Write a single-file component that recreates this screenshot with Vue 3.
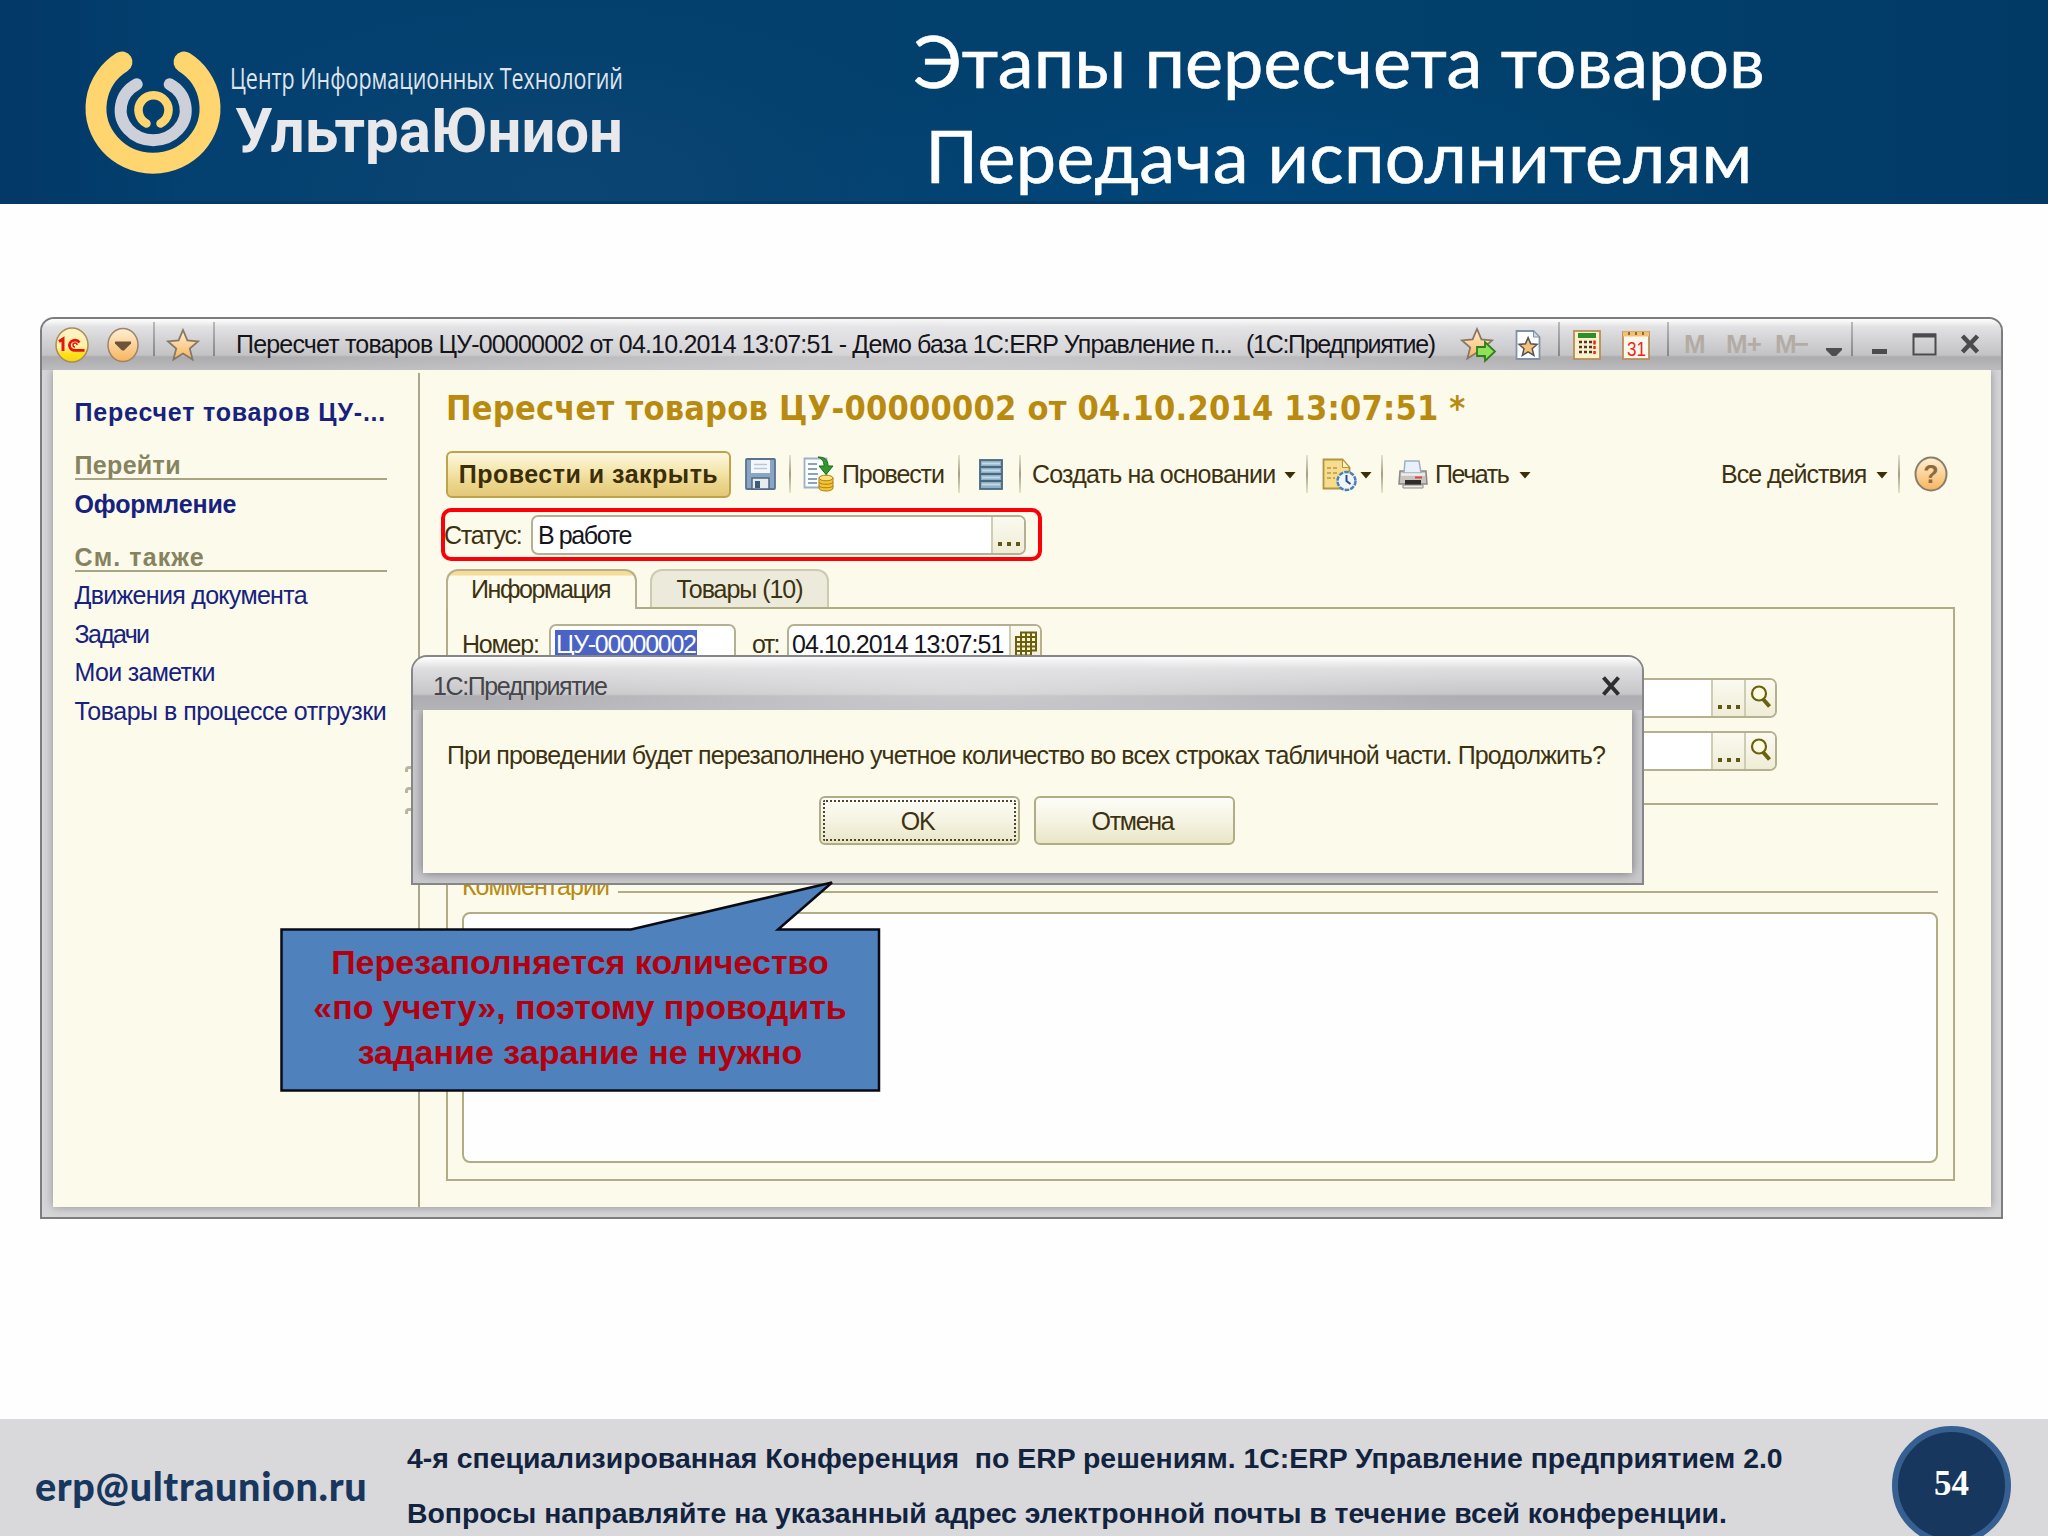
<script setup>
const goLinks = [{ text: 'Оформление', spacing: -0.17 }]
const seeAlso = [
  { text: 'Движения документа', spacing: -0.7 },
  { text: 'Задачи', spacing: -1.7 },
  { text: 'Мои заметки', spacing: -0.69 },
  { text: 'Товары в процессе отгрузки', spacing: -0.5 },
]
const starPoints = '16,1 20.4,11.4 31,12.4 22.8,19.6 25.6,30.6 16,24.6 6.4,30.6 9.2,19.6 1,12.4 11.6,11.4'
</script>

<template>
  <div class="slide">
    <header class="header">
      <svg class="logo" width="640" height="204" viewBox="0 0 640 204">
        <g fill="none" stroke-linecap="round">
          <path d="M122 62 A57 55 0 1 0 184 62" stroke="#ffd570" stroke-width="21" />
          <path d="M136.700 84.300 A32.500 30 0 1 0 169.700 84.300" stroke="#cdd0d9" stroke-width="12" />
          <path d="M146.500 123.500 A15 15 0 1 1 160.500 123.500" stroke="#ffd570" stroke-width="8.500" />
        </g>
        <text class="logo-top" x="230" y="88.500" textLength="393" lengthAdjust="spacingAndGlyphs">Центр Информационных Технологий</text>
        <text class="logo-name" x="235" y="152" textLength="388" lengthAdjust="spacingAndGlyphs">УльтраЮнион</text>
      </svg>
      <h1 class="title">
        Этапы пересчета товаров<br>
        <span class="second">Передача исполнителям</span>
      </h1>
    </header>

    <main class="window">
      <div class="titlebar">
        <svg class="i-1c" width="34" height="36" viewBox="0 0 34 36">
          <defs>
            <linearGradient id="g1c" x1="0" y1="0" x2="0" y2="1">
              <stop offset="0" stop-color="#fff3c9" />
              <stop offset=".6" stop-color="#fff0a0" />
              <stop offset=".75" stop-color="#ffe21a" />
              <stop offset="1" stop-color="#f7d510" />
            </linearGradient>
            <linearGradient id="gor" x1="0" y1="0" x2="0" y2="1">
              <stop offset="0" stop-color="#fff0d6" />
              <stop offset="1" stop-color="#f8b45c" />
            </linearGradient>
          </defs>
          <ellipse cx="17" cy="18" rx="16" ry="17" fill="url(#g1c)" stroke="#a98c5c" stroke-width="1.500" />
          <path d="M4 14.500l4-2.500v12" fill="none" stroke="#e8140c" stroke-width="3" />
          <path d="M24.500 15.500a5.500 5 0 1 0-4 7.800h9" fill="none" stroke="#e8140c" stroke-width="2.800" />
          <path d="M22 18a2 2 0 1 0-2 2" fill="none" stroke="#e8140c" stroke-width="1.500" />
        </svg>
        <svg class="i-menu" width="32" height="36" viewBox="0 0 32 36">
          <ellipse cx="16" cy="18" rx="15" ry="16.500" fill="url(#gor)" stroke="#9b8468" stroke-width="1.500" />
          <path d="M8 14.500h16v2l-7 7h-2l-7-7z" fill="#6b543a" />
        </svg>
        <i class="tsep s1" />
        <svg class="i-star" width="32" height="32" viewBox="0 0 32 32">
          <polygon :points="starPoints" fill="url(#gor)" stroke="#857866" stroke-width="1.800" />
        </svg>
        <i class="tsep s2" />
        <span class="doc-title">Пересчет товаров ЦУ-00000002 от 04.10.2014 13:07:51 - Демо база 1С:ERP Управление п...</span>
        <span class="app-title">(1С:Предприятие)</span>
        <svg width="36" height="34" viewBox="0 0 36 34">
          <polygon :points="starPoints" fill="url(#gor)" stroke="#857866" stroke-width="1.800" />
          <path d="M16 19h8v-5l10 9.500-10 9.500v-5h-8z" fill="#8fe05a" stroke="#2f7d1c" stroke-width="1.800" />
        </svg>
        <svg class="i-favdoc" width="26" height="30" viewBox="0 0 26 30">
          <path d="M1.500 1h17l6 6v22h-23z" fill="#fdfdfd" stroke="#7f93a8" stroke-width="1.800" />
          <path d="M18.500 1v6h6z" fill="#cfdbe6" stroke="#7f93a8" />
          <polygon :points="starPoints" transform="translate(3.500 7) scale(.6)" fill="#f6c279" stroke="#555" stroke-width="2.500" />
        </svg>
        <i class="tsep s3" />
        <svg class="i-calc" width="28" height="30" viewBox="0 0 28 30">
          <rect x="1" y="1" width="26" height="28" fill="#fdf0cd" stroke="#b78f58" stroke-width="1.800" />
          <path d="M5 5.500h18" stroke="#2c8f28" stroke-width="5" />
          <path d="M6 12h13M6 17h13M6 22h13" stroke="#4b3a28" stroke-width="2.500" stroke-dasharray="3 2" />
          <path d="M21.500 10.500v4M21.500 16v3M21.500 21v3" stroke="#e02b16" stroke-width="2.500" />
        </svg>
        <svg class="i-cal" width="28" height="30" viewBox="0 0 28 30">
          <rect x="1" y="2" width="26" height="27" fill="#fff8ef" stroke="#b78f58" stroke-width="1.800" />
          <path d="M1 4h26" stroke="#f5bf6d" stroke-width="5" />
          <path d="M7 2v3M14 2v3M21 2v3" stroke="#8d6a3a" stroke-width="2" />
          <text x="5" y="26" class="t-31" textLength="19" lengthAdjust="spacingAndGlyphs">31</text>
        </svg>
        <i class="tsep s4" />
        <span class="mem m1">M</span>
        <span class="mem m2">M+</span>
        <span class="mem m3">M−</span>
        <svg class="i-down" width="18" height="10" viewBox="0 0 18 10">
          <path d="M1 1h16v2l-6 6h-4l-6-6z" fill="#4e4e50" />
        </svg>
        <i class="tsep s5" />
        <svg class="i-min" width="17" height="22" viewBox="0 0 17 22"><path d="M1 17.500h15" stroke="#4b4b4d" stroke-width="5" /></svg>
        <svg class="i-max" width="25" height="23" viewBox="0 0 25 23">
          <rect x="1.500" y="1.500" width="22" height="20" fill="none" stroke="#4b4b4d" stroke-width="2" />
          <path d="M1 2.500h23" stroke="#4b4b4d" stroke-width="4" />
        </svg>
        <svg class="i-close" width="20" height="20" viewBox="0 0 20 20"><path d="M2.500 1l15 16M17.500 1l-15 16" stroke="#4b4b4d" stroke-width="4.500" /></svg>
      </div>

      <div class="body">
        <nav class="sidebar">
          <div class="nav-title">Пересчет товаров ЦУ-...</div>
          <div class="nav-head">Перейти</div>
          <a
            v-for="link in goLinks"
            :key="link.text"
            class="nav-link strong"
            :style="{ letterSpacing: `${link.spacing}px` }"
          >{{ link.text }}</a>
          <div class="nav-head wide">См. также</div>
          <a
            v-for="link in seeAlso"
            :key="link.text"
            class="nav-link"
            :style="{ letterSpacing: `${link.spacing}px` }"
          >{{ link.text }}</a>
        </nav>

        <section class="form">
          <h2 class="form-title">Пересчет товаров ЦУ-00000002 от 04.10.2014 13:07:51 *</h2>

          <div class="toolbar">
            <button class="primary">Провести и закрыть</button>
            <svg class="i-save" width="31" height="32" viewBox="0 0 31 32">
              <rect x="1" y="1" width="29" height="30" rx="1" fill="#8aa5c1" stroke="#57738f" stroke-width="1.800" />
              <rect x="6" y="2" width="19" height="13" fill="#f3f7fb" />
              <path d="M9 6.500h13M9 10.500h13" stroke="#b9c8d6" stroke-width="1.500" />
              <rect x="7" y="20" width="17" height="11" fill="#e6ebf0" stroke="#4c6780" stroke-width="1.500" />
              <rect x="10" y="23" width="5" height="7" fill="#3f5a74" />
            </svg>
            <i class="sep p1" />
            <svg class="i-post" width="32" height="36" viewBox="0 0 32 36">
              <path d="M1.500 2.500h22v29h-22z" fill="#fbfdff" stroke="#9db0c4" stroke-width="1.800" />
              <path d="M5 8h9M5 13h9M5 18h10M5 23h9M5 27h9" stroke="#8ba2bb" stroke-width="1.800" />
              <path d="M15 1c6 0 10 2 10 9h5l-7 8.500-7-8.500h5c0-5-2-7-6-9z" fill="#2f9a2a" stroke="#1d6b1c" />
              <path d="M16 22v10c0 4 14 4 14 0v-10z" fill="#f4c435" stroke="#ad7f18" />
              <ellipse cx="23" cy="22" rx="7" ry="2.800" fill="#ffe27a" stroke="#ad7f18" />
              <path d="M16 26c0 3 14 3 14 0M16 29.500c0 3 14 3 14 0" fill="none" stroke="#ad7f18" />
            </svg>
            <span class="tool c1">Провести</span>
            <i class="sep" />
            <svg class="i-list" width="24" height="31" viewBox="0 0 24 31">
              <rect x="1" y="1" width="22" height="29" fill="#8fb0c9" stroke="#49687f" stroke-width="1.800" />
              <path d="M3 4.500h18M3 11.500h18M3 18.500h18M3 25.500h18" stroke="#c5d8e6" stroke-width="2" />
              <path d="M1 8h22M1 15h22M1 22h22" stroke="#49687f" stroke-width="1.800" />
            </svg>
            <i class="sep p3" />
            <span class="tool c2">Создать на основании</span>
            <i class="caret" />
            <i class="sep p4" />
            <svg class="i-task" width="35" height="33" viewBox="0 0 35 33">
              <path d="M1.500 1.500h19l7 8v21h-26z" fill="#f6dc8c" stroke="#b39443" stroke-width="1.800" />
              <path d="M20.500 1.500v8h7z" fill="#fff3c4" stroke="#b39443" />
              <path d="M5 10h10M5 15h10M5 20h8" stroke="#c7a95a" stroke-width="1.800" stroke-dasharray="4 2" />
              <circle cx="24.500" cy="23" r="9" fill="#eef5fd" stroke="#4d7fb8" stroke-width="2.500" stroke-dasharray="4.500 1.200" />
              <path d="M24.500 17v6l4 3" fill="none" stroke="#264e80" stroke-width="2" />
            </svg>
            <i class="caret k2" />
            <i class="sep p5" />
            <svg class="i-print" width="30" height="29" viewBox="0 0 30 29">
              <path d="M2 11h26l1 13H1z" fill="#c9c4c0" stroke="#8d8784" stroke-width="1.500" />
              <path d="M7 1h14l2 12H6z" fill="#e8f1fa" stroke="#9fb0c0" stroke-width="1.500" />
              <path d="M3 14.500h24" stroke="#f0eeec" stroke-width="2.500" />
              <path d="M17 17.500h7" stroke="#d9453a" stroke-width="2" />
              <path d="M7 20h16v5H7z" fill="#2f2c2a" />
              <path d="M5 25h20v3H5z" fill="#eceae8" stroke="#8d8784" />
            </svg>
            <span class="tool c3">Печать</span>
            <i class="caret" />
            <span class="tool c4">Все действия</span>
            <i class="caret" />
            <i class="sep p6" />
            <svg class="i-help" width="34" height="36" viewBox="0 0 34 36">
              <ellipse cx="17" cy="18" rx="15.500" ry="16.500" fill="url(#gor)" stroke="#8a7d6c" stroke-width="2" />
              <text x="17" y="26.500" class="t-help" text-anchor="middle">?</text>
            </svg>
          </div>

          <div class="status">
            <span class="label l-status">Статус:</span>
            <div class="field f-status">
              <span class="value">В работе</span>
              <span class="pick"><i /><i /><i /></span>
            </div>
            <div class="highlight" />
          </div>

          <div class="tabs">
            <div class="tab active">Информация</div>
            <div class="tab">Товары (10)</div>
          </div>

          <div class="panel">
            <div class="row">
              <span class="label l-num">Номер:</span>
              <div class="field f-num"><span class="selected">ЦУ-00000002</span></div>
              <span class="label l-from">от:</span>
              <div class="field f-date">
                <span class="value">04.10.2014 13:07:51</span>
                <span class="cal-btn">
                  <svg width="24" height="26" viewBox="0 0 24 26">
                    <path d="M7 1.500h15v18H17v5H2V6h5z" fill="#fdf7d4" stroke="#6a6110" stroke-width="2" />
                    <path d="M2 11h20M2 15.500h20M2 20h15M7 6v18M12 1.500v23M17 1.500V20M7 6h15" stroke="#6a6110" stroke-width="2" />
                  </svg>
                </span>
              </div>
            </div>
            <div v-for="n in 2" :key="n" class="row lookup">
              <div class="field f-lookup">
                <span class="pick"><i /><i /><i /></span>
                <span class="search">
                  <svg width="24" height="26" viewBox="0 0 24 26">
                    <circle cx="10" cy="8.500" r="7" fill="#fffbe0" stroke="#6a6110" stroke-width="2.200" />
                    <path d="M14 14l6.500 7.500" stroke="#6a6110" stroke-width="4" />
                  </svg>
                </span>
              </div>
            </div>
            <hr class="rule">
            <div class="comment-head">
              <span>Комментарий</span>
              <hr class="rule">
            </div>
            <div class="comment" />
          </div>
        </section>
      </div>
    </main>

    <div class="grip"><i /><i /><i /></div>

    <div class="dialog">
      <div class="dialog-bar">
        <span>1С:Предприятие</span>
        <svg width="20" height="20" viewBox="0 0 20 20"><path d="M2.500 1.500l15 17M17.500 1.500l-15 17" stroke="#2e2e30" stroke-width="4" /></svg>
      </div>
      <div class="dialog-body">
        <p class="message">При проведении будет перезаполнено учетное количество во всех строках табличной части. Продолжить?</p>
        <div class="actions">
          <button class="btn focused">OK</button>
          <button class="btn">Отмена</button>
        </div>
      </div>
    </div>

    <div class="callout">
      <svg class="callout-shape" width="602" height="214" viewBox="0 0 602 214">
        <path d="M2.500 50.500H352L553 3.500 499 50.500h101V211.500H2.500z" fill="#4f81bd" stroke="#0a0a14" stroke-width="2.500" />
      </svg>
      <p class="callout-text">
        Перезаполняется количество<br>
        «по учету», поэтому проводить<br>
        задание зарание не нужно
      </p>
    </div>

    <footer class="footer">
      <span class="mail">erp@ultraunion.ru</span>
      <p class="conference">
        4-я специализированная Конференция&nbsp; по ERP решениям. 1С:ERP Управление предприятием 2.0<br>
        Вопросы направляйте на указанный адрес электронной почты в течение всей конференции.
      </p>
      <div class="page-number">54</div>
    </footer>
  </div>
</template>

<style>
body {
  margin: 0;
}
</style>

<style scoped>
.slide {
  position: relative;
  width: 2048px;
  height: 1536px;
  overflow: hidden;
  display: flex;
  flex-direction: column;
  background: #fefefe;
  font-family: "Liberation Sans", Arial, sans-serif;
  font-size: 25px;
  color: #3c3212;
}

.slide * {
  box-sizing: border-box;
}

.slide svg {
  display: block;
  flex: none;
  overflow: visible;
}

p,
h1,
h2,
hr {
  margin: 0;
}

.header {
  height: 204px;
  flex: none;
  display: flex;
  border-bottom: 3px solid #053a64;
  background:
    radial-gradient(ellipse 420px 200px at 560px 190px, #0b4574 0%, transparent 100%),
    radial-gradient(ellipse 500px 160px at 1250px 200px, #01467a 0%, transparent 100%),
    linear-gradient(90deg, #023868 0, #03406f 180px, #02406c 1500px, #023a66 100%);
}

.logo-top {
  font: 400 30px "Open Sans", sans-serif;
  fill: #dfe4ed;
}

.logo-name {
  font: 700 62px Roboto, sans-serif;
  fill: #e9e9ec;
}

.title {
  flex: 1;
  padding: 13px 10px 0 0;
  text-align: center;
  font: 400 72px/95px Lato, sans-serif;
  color: #fff;
  -webkit-text-stroke: 0.6px #fff;
  white-space: nowrap;
}

.second {
  letter-spacing: 0.3px;
}

.window {
  width: 1963px;
  height: 902px;
  flex: none;
  margin: 113px 0 0 40px;
  border: 2px solid #7d7d80;
  border-radius: 14px 14px 0 0;
  background: #d6d6d8;
  overflow: hidden;
}

.titlebar {
  position: relative;
  z-index: 1;
  height: 51px;
  display: flex;
  align-items: center;
  background:
    radial-gradient(ellipse 700px 60px at 45% 50%, rgba(235, 235, 238, 0.55), transparent),
    linear-gradient(180deg, #fff 0, #e2e2e4 8px, #d4d4d6 20px, #c3c3c6 36px, #acacaf 38px, #bcbcbf 100%);
  color: #14141a;
  white-space: nowrap;
}

.i-1c {
  margin-left: 13px;
}

.i-menu {
  margin-left: 18px;
}

.i-star {
  margin-left: 12px;
}

.tsep {
  flex: none;
  align-self: flex-start;
  width: 2px;
  height: 34px;
  margin-top: 3px;
  background: linear-gradient(180deg, #b9b9bb, #85858a);
}

.s1 {
  margin-left: 14px;
}

.s2 {
  margin-left: 14px;
}

.s3 {
  margin-left: 17px;
}

.s4 {
  margin-left: 17px;
}

.s5 {
  margin-left: 8px;
}

.doc-title {
  flex: none;
  width: 1010px;
  margin-left: 21px;
  letter-spacing: -0.82px;
}

.app-title {
  flex: none;
  width: 215px;
  letter-spacing: -1.3px;
}

.i-favdoc {
  margin-left: 18px;
}

.i-calc {
  margin-left: 13px;
}

.i-cal {
  margin-left: 21px;
}

.t-31 {
  font: 400 21px "Liberation Sans", sans-serif;
  fill: #e8281a;
}

.mem {
  flex: none;
  font: 700 26px "Liberation Sans", sans-serif;
  letter-spacing: -1px;
  color: #b3aca5;
}

.m1 {
  width: 42px;
  margin-left: 15px;
}

.m2 {
  width: 49px;
}

.m3 {
  width: 50px;
  letter-spacing: -3px;
}

.i-down {
  margin-top: 14px;
}

.i-min {
  margin-left: 18px;
}

.i-max {
  margin-left: 24px;
}

.i-close {
  margin-left: 23px;
}

.body {
  display: flex;
  height: 837px;
  margin: 0 10px 0 11px;
  background: #fcfaea;
  box-shadow: 0 0 9px rgba(105, 105, 115, 0.65);
  white-space: nowrap;
}

.sidebar {
  flex: none;
  width: 367px;
  margin-top: 3px;
  padding: 20px 31px 0 21.5px;
  border-right: 2px solid #aaa78c;
}

.nav-title {
  line-height: 38px;
  font-weight: 700;
  letter-spacing: 0.8px;
  color: #17227f;
}

.nav-head {
  height: 28px;
  margin-top: 21px;
  line-height: 27px;
  font-weight: 700;
  letter-spacing: 0.33px;
  color: #86835f;
  border-bottom: 2px solid #a8a584;
}

.nav-head.wide {
  line-height: 26px;
  letter-spacing: 1.1px;
}

.nav-link {
  display: block;
  line-height: 38.4px;
  color: #17227f;
}

.nav-head + .nav-link {
  margin-top: 4.5px;
}

.strong {
  font-weight: 700;
}

.form {
  flex: 1;
  padding: 15.5px 36px 0 26px;
}

.form-title {
  font: 700 34px/44px "DejaVu Sans Condensed", "DejaVu Sans", sans-serif;
  letter-spacing: 0.24px;
  color: #b98a10;
}

.toolbar {
  display: flex;
  align-items: center;
  height: 48px;
  margin-top: 20.5px;
}

.primary {
  flex: none;
  width: 285px;
  height: 47px;
  padding: 0;
  border: 2px solid #bfa24c;
  border-radius: 6px;
  background: linear-gradient(180deg, #fdf8e2 0, #f6e9b4 35%, #ecd68d 70%, #e3c878 100%);
  font: 700 25px "Liberation Sans", sans-serif;
  letter-spacing: 0.49px;
  color: #3c2e08;
}

.i-save {
  margin-left: 14px;
}

.sep {
  flex: none;
  width: 2px;
  height: 38px;
  background: linear-gradient(180deg, #e6e3cc, #a3a085 50%, #e6e3cc);
}

.p1 {
  margin-left: 13px;
}

.i-post {
  margin-left: 12px;
}

.tool {
  flex: none;
}

.c1 {
  width: 116px;
  margin-left: 7px;
  letter-spacing: -1.1px;
}

.i-list {
  margin-left: 19px;
}

.p3 {
  margin-left: 16px;
}

.c2 {
  width: 252px;
  margin-left: 11px;
  letter-spacing: -0.8px;
}

.caret {
  flex: none;
  width: 12px;
  height: 7px;
  margin-top: 2px;
  background: #3c2e08;
  clip-path: polygon(0 0, 100% 0, 50% 100%);
}

.k2 {
  margin-left: 3px;
}

.p4 {
  margin-left: 10px;
}

.i-task {
  margin-left: 14px;
}

.p5 {
  margin-left: 9px;
}

.i-print {
  margin-left: 15px;
}

.c3 {
  width: 84px;
  margin-left: 7px;
  letter-spacing: -1.4px;
}

.c4 {
  width: 155px;
  margin-left: auto;
  letter-spacing: -1px;
}

.p6 {
  margin-left: 10px;
}

.i-help {
  margin: 0 7px 0 14px;
}

.t-help {
  font: 700 25px "Liberation Sans", sans-serif;
  fill: #8a6a3e;
}

.status {
  position: relative;
  display: flex;
  align-items: center;
  height: 39px;
  margin-top: 17.5px;
}

.label {
  flex: none;
}

.l-status {
  width: 87px;
  margin-left: -2px;
  letter-spacing: -1.2px;
}

.field {
  flex: none;
  display: flex;
  align-items: center;
  height: 40px;
  border: 2px solid #b5b190;
  border-radius: 7px;
  background: #fff;
  color: #14141a;
  overflow: hidden;
}

.f-status {
  width: 495px;
}

.f-status .value {
  padding-left: 5px;
  letter-spacing: -1.4px;
}

.value {
  flex: 1;
}

.pick {
  display: flex;
  align-items: flex-end;
  justify-content: center;
  gap: 5px;
  width: 33px;
  height: 100%;
  padding-bottom: 7px;
  border-left: 2px solid #cfccb4;
  background: linear-gradient(180deg, #fbfaf0, #efecd6);
}

.pick i {
  width: 4px;
  height: 4px;
  background: #5f5716;
}

.highlight {
  position: absolute;
  top: -8px;
  left: -5px;
  width: 601px;
  height: 53px;
  border: 4px solid #fb0007;
  border-radius: 10px;
}

.tabs {
  position: relative;
  display: flex;
  height: 38px;
  margin-top: 14px;
}

.tab {
  width: 179px;
  height: 38px;
  border: 2px solid #cdcab2;
  border-bottom: 0;
  border-radius: 12px 12px 0 0;
  background: #ecebdb;
  text-align: center;
  line-height: 37px;
  letter-spacing: -1.04px;
}

.tab.active {
  width: 191px;
  height: 40px;
  margin-right: 13px;
  padding-right: 2px;
  border-color: #b5b190;
  background: linear-gradient(180deg, #f6dc94 0, #f6dc94 4px, #fcfaea 5px);
  letter-spacing: -1.4px;
}

.panel {
  height: 574px;
  padding: 15.5px 15px 0 14px;
  border: 2px solid #b0ad86;
}

.row {
  display: flex;
  align-items: center;
  height: 40px;
}

.l-num {
  width: 87px;
  letter-spacing: -1.2px;
}

.f-num {
  width: 187px;
}

.selected {
  margin-left: 4px;
  padding: 0 1px;
  line-height: 29px;
  letter-spacing: -1.3px;
  background: #4a63c4;
  color: #fff;
}

.l-from {
  width: 35px;
  margin-left: 16px;
  letter-spacing: -1.6px;
}

.f-date {
  width: 255px;
}

.f-date .value {
  padding-left: 3px;
  letter-spacing: -0.95px;
}

.cal-btn,
.search {
  display: flex;
  align-items: center;
  justify-content: center;
  width: 31px;
  height: 100%;
  border-left: 2px solid #cfccb4;
  background: linear-gradient(180deg, #fbfaf0, #efecd6);
}

.lookup {
  margin-top: 13.5px;
}

.f-lookup {
  width: 1228px;
  margin-left: 87px;
  justify-content: flex-end;
}

.rule {
  height: 2px;
  border: 0;
  background: #b0ad86;
}

.panel > .rule {
  margin-top: 32px;
}

.comment-head {
  display: flex;
  align-items: center;
  height: 30px;
  margin-top: 66px;
  color: #b98a10;
  letter-spacing: -0.95px;
}

.comment-head .rule {
  flex: 1;
  margin: 12px 0 0 9px;
}

.comment {
  height: 251px;
  margin-top: 11px;
  border: 2px solid #b0ad86;
  border-radius: 8px;
  background: #fefefe;
}

.grip {
  position: absolute;
  top: 766px;
  left: 405px;
  display: flex;
  flex-direction: column;
  gap: 15px;
}

.grip i {
  width: 8px;
  height: 6px;
  border: solid #b9b69f;
  border-width: 3px 0 0 3px;
  border-radius: 4px 0 0 0;
}

.dialog {
  position: absolute;
  top: 655px;
  left: 411px;
  width: 1233px;
  height: 230px;
  border: 2px solid #868688;
  border-radius: 16px 16px 0 0;
  background: #cacacd;
  overflow: hidden;
  white-space: nowrap;
}

.dialog-bar {
  position: relative;
  z-index: 1;
  display: flex;
  align-items: center;
  justify-content: space-between;
  height: 53px;
  padding: 5px 21px 0 20px;
  background:
    radial-gradient(ellipse 500px 60px at 45% 60%, rgba(235, 235, 238, 0.5), transparent),
    linear-gradient(180deg, #fff 0, #dededf 12px, #c6c6c9 37px, #aeaeb2 39px, #b4b4b8 100%);
  color: #45454a;
  letter-spacing: -1.4px;
}

.dialog-body {
  height: 163px;
  margin: 0 10px;
  padding-top: 27px;
  background: #fcfaea;
  box-shadow: 0 0 10px rgba(80, 80, 90, 0.75);
}

.message {
  padding-left: 24px;
  line-height: 36px;
  letter-spacing: -0.86px;
}

.actions {
  display: flex;
  gap: 14px;
  margin: 23px 0 0 396px;
}

.btn {
  width: 201px;
  height: 49px;
  padding: 1px 4px 0 0;
  border: 2px solid #b0ad86;
  border-radius: 6px;
  background: linear-gradient(180deg, #fdfdf8 0, #f5f3e2 50%, #e9e6c8 100%);
  font: 400 25px "Liberation Sans", sans-serif;
  letter-spacing: -1.3px;
  color: #3c3212;
}

.focused {
  outline: 2px dotted #4b4632;
  outline-offset: -6px;
}

.callout {
  position: absolute;
  top: 879px;
  left: 279px;
  width: 602px;
  height: 214px;
}

.callout-shape {
  position: absolute;
}

.callout-text {
  position: relative;
  padding-top: 61px;
  text-align: center;
  font: 700 34px/45px "Liberation Sans", sans-serif;
  color: #b2000e;
  white-space: nowrap;
}

.footer {
  display: flex;
  height: 117px;
  flex: none;
  margin-top: 200px;
  background: #d9d8da;
  color: #12233f;
  white-space: nowrap;
}

.mail {
  width: 407px;
  padding: 42px 0 0 35px;
  font: 900 39.5px/50px Lato, sans-serif;
  letter-spacing: 0.65px;
  color: #17375e;
}

.conference {
  flex: none;
  width: 1485px;
  padding-top: 12px;
  font: 700 28.4px/54.5px "Liberation Sans", sans-serif;
}

.page-number {
  width: 119px;
  height: 119px;
  flex: none;
  margin-top: 7px;
  border: 6px solid #376092;
  border-radius: 50%;
  background: #17375e;
  color: #fff;
  text-align: center;
  font: 700 35px/103px "Liberation Serif", serif;
}
</style>
